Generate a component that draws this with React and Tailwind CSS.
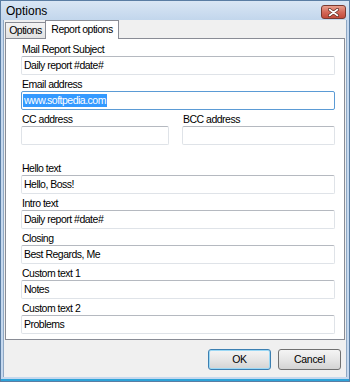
import { useState } from 'react';

const font = { fontFamily: '"Liberation Sans", Arial, sans-serif' };

function Field({ label, value, selected, focused }) {
  return (
    <div className="flex flex-col">
      <div className="h-[13px] leading-[13px] text-[10.5px] tracking-[-0.5px] whitespace-nowrap text-black pl-[1px]">{label}</div>
      <div
        className={`h-[19px] flex items-center rounded-[2px] border bg-white px-[1px] text-[10.5px] tracking-[-0.5px] whitespace-nowrap text-black ${
          focused ? 'border-[#5b9bd5]' : 'border-[#dfe3e8] border-t-[#b5b9c0]'
        }`}
      >
        {selected ? (
          <span className="bg-[#3399ff] text-white leading-[13px] px-[1px]">{value}</span>
        ) : (
          <span className="leading-[13px] pl-[1px]">{value}</span>
        )}
      </div>
    </div>
  );
}

function Button({ children, primary }) {
  return (
    <button
      className={`w-[63px] h-[21px] rounded-[3px] border text-[10.5px] tracking-[-0.3px] text-black bg-gradient-to-b from-[#f4f4f4] via-[#e6e6e6] to-[#d3d3d3] ${
        primary ? 'border-[#3c7fb1] shadow-[inset_0_0_0_1px_#9bd8f5]' : 'border-[#707070]'
      }`}
    >
      {children}
    </button>
  );
}

export default function App() {
  const [tab] = useState('report');

  return (
    <div className="w-[350px] h-[382px] flex flex-col bg-[#c5d8ee] border border-[#5a7da3]" style={font}>
      {/* title bar */}
      <div className="h-[19px] flex items-center justify-between pl-[5px] pr-[3px] bg-gradient-to-b from-[#d9e6f4] to-[#c2d6ec]">
        <span className="text-[12px] text-black">Options</span>
        <div className="w-[25px] h-[14px] mt-[3px] rounded-[3px] border border-[#7a3a30] bg-gradient-to-b from-[#e8a08e] via-[#d4695a] to-[#c24a3a] flex items-center justify-center">
          <svg width="11" height="9" viewBox="0 0 11 9">
            <path d="M1.5 1.5 L9.5 7.5 M9.5 1.5 L1.5 7.5" stroke="#5a2a20" strokeWidth="3" strokeLinecap="round" />
            <path d="M1.5 1.5 L9.5 7.5 M9.5 1.5 L1.5 7.5" stroke="#fff" strokeWidth="1.6" strokeLinecap="round" />
          </svg>
        </div>
      </div>

      <div className="flex-1 flex mx-[2px] mb-[2px] bg-[#f0f0f0] border-x border-[#8fa8c4]">
        <div className="flex-1 flex flex-col px-[1px]">
          {/* tabs */}
          <div className="h-[18px] flex items-end text-[10.5px] tracking-[-0.5px] whitespace-nowrap text-black">
            <div className="h-[16px] w-[41px] flex items-center justify-center border border-b-0 border-[#898c95] bg-gradient-to-b from-[#f3f3f3] to-[#e2e2e2]">
              Options
            </div>
            <div className={`h-[19px] w-[74px] -ml-[1px] -mb-[1px] relative flex items-center justify-center border border-b-0 border-[#898c95] bg-white ${tab ? '' : ''}`}>
              Report options
            </div>
          </div>

          {/* panel */}
          <div className="h-[302px] border border-[#898c95] bg-white pl-[15px] pr-[9px] pt-[4px] flex flex-col">
            <div className="flex flex-col gap-[3px]">
              <Field label="Mail Report Subject" value="Daily report #date#" />
              <Field label="Email address" value="www.softpedia.com" selected focused />
              <div className="flex gap-[13px]">
                <div className="w-[148px]">
                  <Field label="CC address" value="" />
                </div>
                <div className="flex-1">
                  <Field label="BCC address" value="" />
                </div>
              </div>
            </div>
            <div className="flex flex-col gap-[3px] mt-[17px]">
              <Field label="Hello text" value="Hello, Boss!" />
              <Field label="Intro text" value="Daily report #date#" />
              <Field label="Closing" value="Best Regards, Me" />
              <Field label="Custom text 1" value="Notes" />
              <Field label="Custom text 2" value="Problems" />
            </div>
          </div>

          {/* buttons */}
          <div className="flex-1 flex items-start justify-end gap-[7px] pt-[9px] pr-[4px]">
            <Button primary>OK</Button>
            <Button>Cancel</Button>
          </div>
        </div>
      </div>
      <div className="h-[2px] bg-[#2ea3d8]" />
    </div>
  );
}
